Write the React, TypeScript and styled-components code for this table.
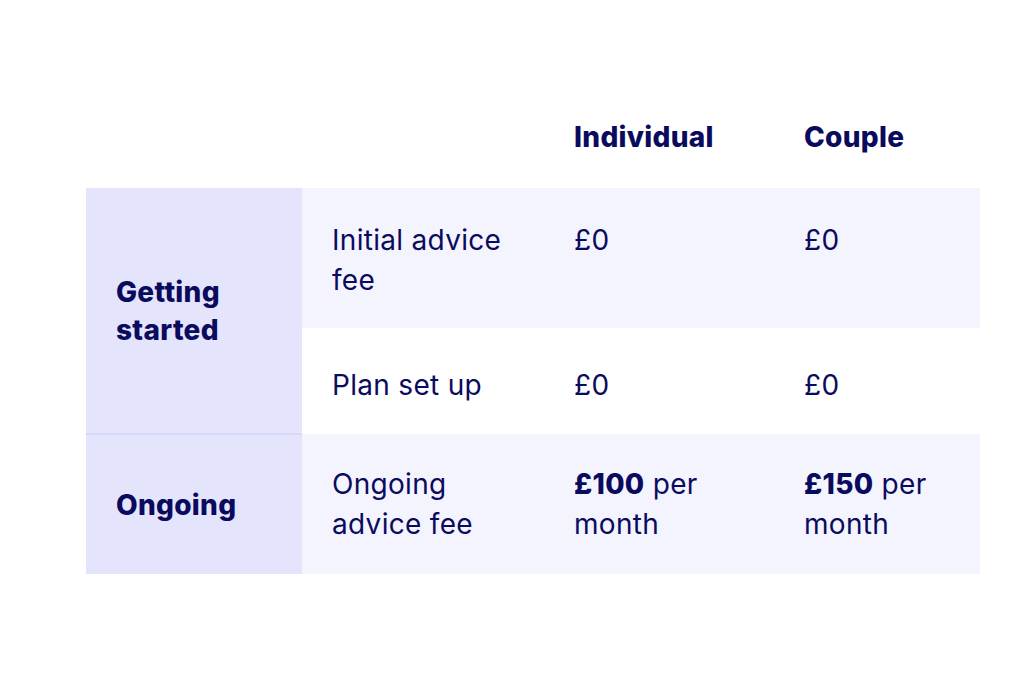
import React from "react";
import styled, { createGlobalStyle } from "styled-components";

const GlobalStyle = createGlobalStyle`
  html, body {
    margin: 0;
    padding: 0;
    background: #ffffff;
  }
  body {
    font-family: Inter, "Noto Sans", sans-serif;
    color: #0b0b5e;
  }
`;

const Page = styled.div`
  padding: 100px 0 0 86px;
`;

const Table = styled.table`
  border-collapse: collapse;
  table-layout: fixed;
  width: 894px;
`;

const HeadCell = styled.th`
  box-sizing: border-box;
  height: 88px;
  padding: 17px 30px 0;
  vertical-align: top;
  text-align: left;
  font-size: 28px;
  line-height: 40px;
  font-weight: 800;
  letter-spacing: 0.3px;
`;

const GroupCell = styled.th<{ $divider?: boolean }>`
  background: #e4e4fd;
  padding: 0 30px;
  text-align: left;
  vertical-align: middle;
  font-size: 28px;
  line-height: 38px;
  font-weight: 800;
  letter-spacing: 0.3px;
  border-top: ${({ $divider }) => ($divider ? "2px solid #d8d8fa" : "none")};
`;

const Row = styled.tr<{ $shaded?: boolean; $height: number; $padTop: number }>`
  height: ${({ $height }) => $height}px;
  & > td {
    background: ${({ $shaded }) => ($shaded ? "#f4f4fe" : "#ffffff")};
    padding-top: ${({ $padTop }) => $padTop}px;
  }
`;

const Cell = styled.td`
  padding: 0 30px;
  vertical-align: top;
  font-size: 28px;
  line-height: 40px;
  font-weight: 400;
  letter-spacing: 0.3px;
`;

const Strong = styled.strong`
  font-weight: 800;
`;

export default function App() {
  return (
    <>
      <GlobalStyle />
      <Page>
        <Table>
          <colgroup>
            <col style={{ width: 216 }} />
            <col style={{ width: 242 }} />
            <col style={{ width: 230 }} />
            <col style={{ width: 206 }} />
          </colgroup>
          <thead>
            <tr>
              <HeadCell />
              <HeadCell />
              <HeadCell>Individual</HeadCell>
              <HeadCell>Couple</HeadCell>
            </tr>
          </thead>
          <tbody>
            <Row $shaded $height={140} $padTop={32}>
              <GroupCell rowSpan={2}>Getting started</GroupCell>
              <Cell>Initial advice fee</Cell>
              <Cell>£0</Cell>
              <Cell>£0</Cell>
            </Row>
            <Row $height={106} $padTop={37}>
              <Cell>Plan set up</Cell>
              <Cell>£0</Cell>
              <Cell>£0</Cell>
            </Row>
            <Row $shaded $height={140} $padTop={30}>
              <GroupCell $divider>Ongoing</GroupCell>
              <Cell>Ongoing advice fee</Cell>
              <Cell>
                <Strong>£100</Strong> per month
              </Cell>
              <Cell>
                <Strong>£150</Strong> per month
              </Cell>
            </Row>
          </tbody>
        </Table>
      </Page>
    </>
  );
}
